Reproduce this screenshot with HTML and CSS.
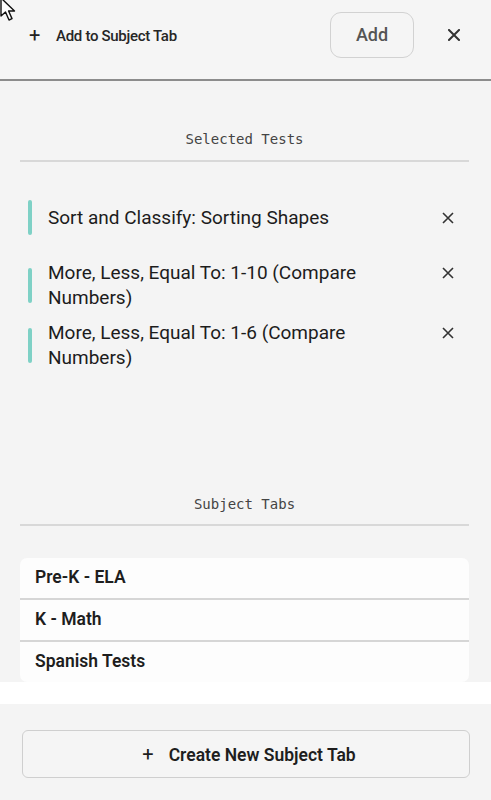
FILE: index.html
```html
<!DOCTYPE html>
<html lang="en">
<head>
    <meta charset="UTF-8">
    <meta name="viewport" content="width=device-width, initial-scale=1.0">
    <title>Add to Subject Tab</title>
    <link rel="stylesheet" href="styles.css">
</head>
<body>
    <div class="panel">
        <header class="header">
            <span class="plus">+</span>
            <span class="header-title">Add to Subject Tab</span>
            <button class="add-btn">Add</button>
            <button class="close-btn" aria-label="Close">
                <svg width="12" height="12" viewBox="0 0 12 12"><path d="M1 1 L11 11 M11 1 L1 11" stroke="#333" stroke-width="2" stroke-linecap="square"/></svg>
            </button>
        </header>

        <main class="content">
            <h2 class="section-title">Selected Tests</h2>
            <ul class="tests">
                <li class="test">
                    <span class="bar"></span>
                    <span class="test-name">Sort and Classify: Sorting Shapes</span>
                    <button class="remove" aria-label="Remove">
                        <svg width="12" height="12" viewBox="0 0 12 12"><path d="M1 1 L11 11 M11 1 L1 11" stroke="#333" stroke-width="1.6"/></svg>
                    </button>
                </li>
                <li class="test">
                    <span class="bar"></span>
                    <span class="test-name">More, Less, Equal To: 1-10 (Compare Numbers)</span>
                    <button class="remove" aria-label="Remove">
                        <svg width="12" height="12" viewBox="0 0 12 12"><path d="M1 1 L11 11 M11 1 L1 11" stroke="#333" stroke-width="1.6"/></svg>
                    </button>
                </li>
                <li class="test">
                    <span class="bar"></span>
                    <span class="test-name">More, Less, Equal To: 1-6 (Compare Numbers)</span>
                    <button class="remove" aria-label="Remove">
                        <svg width="12" height="12" viewBox="0 0 12 12"><path d="M1 1 L11 11 M11 1 L1 11" stroke="#333" stroke-width="1.6"/></svg>
                    </button>
                </li>
            </ul>

            <h2 class="section-title tabs-title">Subject Tabs</h2>
            <ul class="tabs">
                <li class="tab">Pre-K - ELA</li>
                <li class="tab">K - Math</li>
                <li class="tab">Spanish Tests</li>
            </ul>
        </main>

        <div class="gap"></div>

        <footer class="footer">
            <button class="create-btn"><span class="create-plus">+</span>Create New Subject Tab</button>
        </footer>
    </div>

    <svg class="cursor" width="20" height="28" viewBox="0 0 20 28">
        <path d="M1 -2 L1 16 L5.5 12 L9 20 L12 18.6 L8.6 11 L14.5 11 Z" fill="#fff" stroke="#111" stroke-width="1.4" stroke-linejoin="round"/>
    </svg>
</body>
</html>
```

FILE: styles.css
```css
body {
    margin: 0;
    background: #f4f4f4;
    font-family: Roboto, "Noto Sans", sans-serif;
    color: #222;
}
.panel {
    display: flex;
    flex-direction: column;
    height: 800px;
}
.header {
    display: flex;
    align-items: center;
    height: 45px;
    padding: 12px 25px 22px 29px;
    border-bottom: 2px solid #8c8c8c;
    background: #f5f5f5;
}
.plus {
    font-size: 20px;
    font-weight: 400;
    color: #222;
    width: 27px;
    line-height: 1;
}
.header-title {
    flex: 1;
    font-size: 15px;
    font-weight: 500;
    letter-spacing: -0.3px;
    color: #262626;
    padding-top: 2px;
}
.add-btn {
    width: 84px;
    height: 46px;
    border: 1.5px solid #d2d2d2;
    border-radius: 11px;
    background: #f5f5f5;
    font-family: Roboto, sans-serif;
    font-size: 18px;
    font-weight: 500;
    color: #555;
    cursor: pointer;
}
.close-btn {
    margin-left: 28px;
    width: 24px;
    height: 24px;
    padding: 0;
    border: none;
    background: none;
    display: flex;
    align-items: center;
    justify-content: center;
}
.content {
    height: 601px;
    overflow: hidden;
    padding: 0 22px 0 20px;
    box-sizing: border-box;
}
.section-title {
    margin: 0;
    padding: 48px 0 11px;
    text-align: center;
    font-family: "DejaVu Sans Mono", "Liberation Mono", monospace;
    font-size: 14px;
    font-weight: 400;
    line-height: 20px;
    color: #444;
    border-bottom: 2px solid #d8d8d8;
}
.tabs-title {
    padding-top: 124px;
    padding-bottom: 10px;
}
.tests {
    list-style: none;
    margin: 0;
    padding: 38px 0 0 8px;
    display: flex;
    flex-direction: column;
    gap: 10px;
}
.test {
    display: flex;
    align-items: center;
    min-height: 35px;
}
.test:first-child {
    margin-bottom: 15px;
}
.bar {
    flex: none;
    width: 4px;
    height: 35px;
    border-radius: 2px;
    background: #7fd1c6;
    margin-right: 16px;
}
.test-name {
    flex: 1;
    font-size: 19px;
    line-height: 25px;
    color: #1c1c1c;
    padding-right: 50px;
}
.remove {
    flex: none;
    align-self: flex-start;
    margin-top: 6px;
    width: 24px;
    height: 14px;
    padding: 0;
    margin-right: 9px;
    border: none;
    background: none;
    display: flex;
    align-items: center;
    justify-content: center;
}
.test:first-child .remove {
    align-self: center;
    margin-top: 0;
}
.tabs {
    list-style: none;
    margin: 32px 0 0;
    padding: 0;
    background: #fdfdfd;
    border-radius: 7px;
}
.tab {
    height: 40px;
    line-height: 38px;
    padding-left: 15px;
    font-size: 17.5px;
    font-weight: 600;
    color: #1e1e1e;
    border-bottom: 2px solid #d6d6d6;
}
.tab:last-child {
    border-bottom: none;
}
.gap {
    height: 22px;
    background: #fff;
}
.footer {
    flex: 1;
    padding: 26px 21px 0 22px;
    background: #f4f4f4;
}
.create-btn {
    width: 100%;
    height: 48px;
    padding-left: 12px;
    border: 1.5px solid #cfcfcf;
    border-radius: 6px;
    background: #f5f5f5;
    font-family: Roboto, sans-serif;
    font-size: 17.5px;
    font-weight: 600;
    color: #1e1e1e;
    cursor: pointer;
}
.create-plus {
    font-size: 20px;
    font-weight: 400;
    margin-right: 15px;
}
.cursor {
    position: absolute;
    top: 0;
    left: 0;
}
```
